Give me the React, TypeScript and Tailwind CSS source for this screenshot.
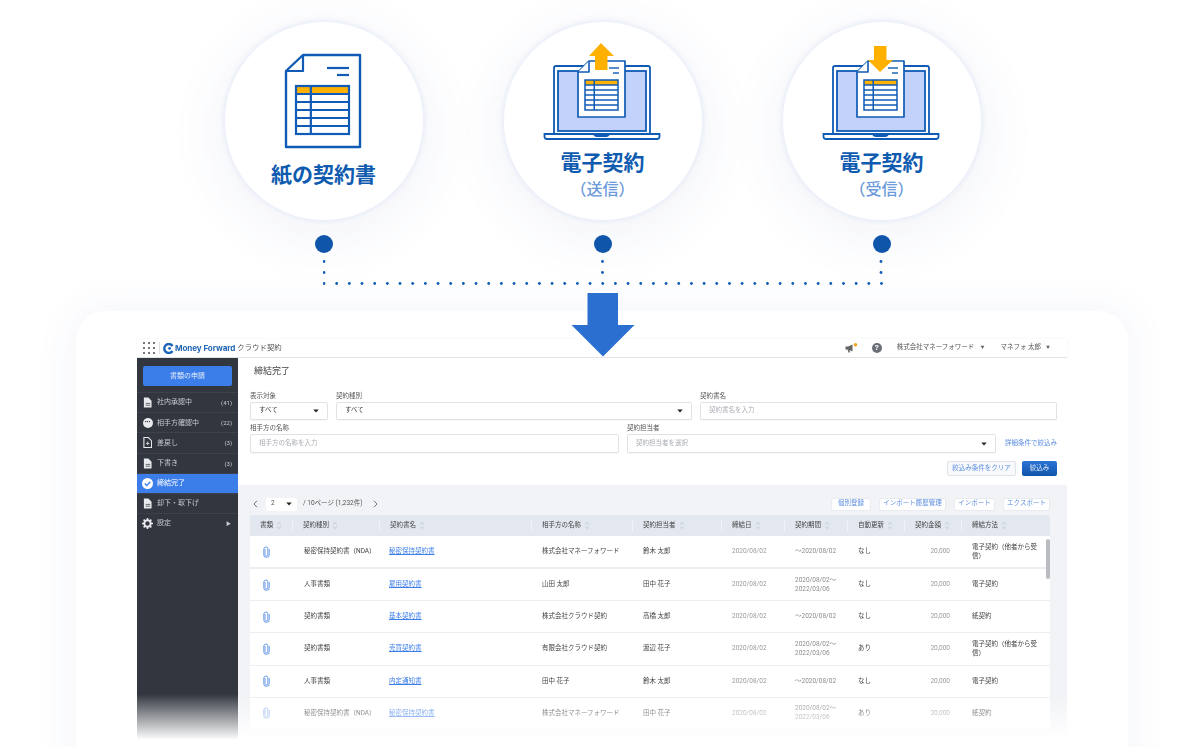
import React from "react";

const BLUE = "#0f5bb5";
const ORANGE = "#ffb000";

function MiniTable({ x, y, w, h, sw }: { x: number; y: number; w: number; h: number; sw: number }) {
  const rows = 6;
  const rh = h / rows;
  const split = x + w * 0.28;
  return (
    <g>
      <rect x={x} y={y} width={w} height={rh} fill={ORANGE} />
      <rect x={x} y={y} width={w} height={h} fill="none" stroke={BLUE} strokeWidth={sw} />
      {[1, 2, 3, 4, 5].map((i) => (
        <line key={i} x1={x} x2={x + w} y1={y + rh * i} y2={y + rh * i} stroke={BLUE} strokeWidth={sw} />
      ))}
      <line x1={split} x2={split} y1={y} y2={y + h} stroke={BLUE} strokeWidth={sw} />
    </g>
  );
}

function PaperIcon() {
  return (
    <svg width="80" height="96" viewBox="0 0 80 96" className="ml-[-1px] block">
      <path d="M20 2 H77 V94 H3 V18 Z" fill="#fff" stroke={BLUE} strokeWidth="2.4" strokeLinejoin="round" />
      <path d="M20 2 V18 H3" fill="none" stroke={BLUE} strokeWidth="2.2" strokeLinejoin="round" />
      <line x1="44" x2="66" y1="15" y2="15" stroke={BLUE} strokeWidth="2.2" />
      <line x1="54" x2="66" y1="22" y2="22" stroke={BLUE} strokeWidth="2.2" />
      <MiniTable x={13} y={33} w={53} h={48} sw={2.2} />
    </svg>
  );
}

function LaptopIcon({ dir }: { dir: "up" | "down" }) {
  return (
    <svg width="118" height="98" viewBox="0 0 118 98" className="ml-[-2px] block">
      <path d="M11 26 Q11 24 13 24 H105 Q107 24 107 26 V92 H11 Z" fill="#fff" stroke={BLUE} strokeWidth="1.8" />
      <rect x="15" y="29" width="88" height="60" fill="#c2d2fa" stroke={BLUE} strokeWidth="1.8" />
      <path d="M1.5 92 H116.5 V94.5 Q116.5 97 114 97 H4 Q1.5 97 1.5 94.5 Z" fill="#fff" stroke={BLUE} strokeWidth="1.8" />
      <path d="M50 92 H67 Q66 95 63 95 H54 Q51 95 50 92 Z" fill={BLUE} />
      <path d="M46 19 H82 V75 H35 V30 Z" fill="#fff" stroke={BLUE} strokeWidth="1.7" strokeLinejoin="round" />
      <path d="M46 19 V30 H35" fill="#fff" stroke={BLUE} strokeWidth="1.6" strokeLinejoin="round" />
      <line x1="66" x2="76" y1="26" y2="26" stroke={BLUE} strokeWidth="1.4" />
      <line x1="70" x2="76" y1="31" y2="31" stroke={BLUE} strokeWidth="1.4" />
      <MiniTable x={42} y={38} w={33} h={30} sw={1.5} />
      {dir === "down" ? (
        <path d="M52 4 H64.5 V18 H71 L58 30 L46 18 H52 Z" fill={ORANGE} />
      ) : (
        <path d="M58 1 L71 14 H64.5 V28 H52 V14 H46 Z" fill={ORANGE} />
      )}
    </svg>
  );
}

function Bubble({ title, sub, children }: { title: string; sub?: string; children: React.ReactNode }) {
  return (
    <div className="flex w-[279px] flex-col items-center">
      <div className="flex h-[198px] w-[198px] flex-col items-center rounded-full bg-white shadow-[0_0_3px_3px_rgba(228,233,248,0.5),0_12px_50px_14px_rgba(60,80,150,0.05)]">
        {sub ? (
          <>
            <div className="mt-[20px] h-[98px]">{children}</div>
            <div className="mt-[9px] text-[21px] leading-[28px] font-bold text-[#0f5bb0]">{title}</div>
            <div className="mt-0 text-[16px] leading-[26px] font-medium text-[#6d9adb]">{sub}</div>
          </>
        ) : (
          <>
            <div className="mt-[31px] h-[96px]">{children}</div>
            <div className="mt-[11px] text-[21px] leading-[30px] font-bold text-[#0f5bb0]">{title}</div>
          </>
        )}
      </div>
      <div className="mt-[15px] h-[18px] w-[18px] rounded-full bg-[#0f55aa]" />
    </div>
  );
}

function Connector() {
  const xs = Array.from({ length: 45 }, (_, i) => i * 12.67);
  return (
    <svg width="560" height="26" viewBox="0 0 560 26" className="mt-[7px] ml-[139px] block">
      {xs.map((x) => (
        <circle key={x} cx={x + 1} cy="23.5" r="1.4" fill={BLUE} />
      ))}
      {[1, 279.5, 558].flatMap((x) =>
        [1.5, 12.5].map((y) => <circle key={`${x}-${y}`} cx={x} cy={y} r="1.4" fill={BLUE} />)
      )}
    </svg>
  );
}

function DocGlyph({ plus }: { plus?: boolean }) {
  return (
    <svg width="9" height="11" viewBox="0 0 10 12" className="block">
      <path d="M1 0.5 H6 L9.5 4 V11.5 H1 Z" fill={plus ? "none" : "#e8eaee"} stroke="#e8eaee" strokeWidth={plus ? 1.2 : 0} />
      {plus ? (
        <path d="M3.5 7 H7 M5.2 5.2 V8.8" stroke="#e8eaee" strokeWidth="1" />
      ) : (
        <path d="M3 7 H8 M3 9 H8" stroke="#31363f" strokeWidth="0.8" />
      )}
    </svg>
  );
}

function SideItem({ icon, label, count, active, arrow }: { icon: React.ReactNode; label: string; count?: string; active?: boolean; arrow?: boolean }) {
  return (
    <div className={`flex h-[20.2px] items-center border-t border-[#3c414b] pr-[6px] pl-[5px] text-[7px] ${active ? "bg-[#3b7de9] text-white" : "text-[#c9ccd3]"}`}>
      <div className="flex w-[11px] shrink-0 justify-center">{icon}</div>
      <span className="ml-[4px]">{label}</span>
      {count && <span className="ml-auto text-[6px]">{count}</span>}
      {arrow && <span className="mr-[1px] ml-auto text-[5px]">▶</span>}
    </div>
  );
}

function Sort() {
  return (
    <svg width="4" height="7" viewBox="0 0 4 7" className="ml-[4px] block shrink-0">
      <path d="M0 2.6 L2 0.4 L4 2.6 M0 4.4 L2 6.6 L4 4.4" fill="none" stroke="#b4bcc9" strokeWidth="0.7" />
    </svg>
  );
}

function Clip({ faded }: { faded?: boolean }) {
  return (
    <svg width="7" height="12" viewBox="0 0 7 12" className="block" opacity={faded ? 0.8 : 1}>
      <path d="M2 3 V8.8 Q2 10 3.4 10 Q4.8 10 4.8 8.8 V2.6 Q4.8 1 3.3 1 Q1 1 0.8 3 V9 Q0.8 11.4 3.4 11.4 Q6.2 11.4 6.2 9 V3" fill="none" stroke="#5d92e6" strokeWidth="0.9" />
    </svg>
  );
}

function Caret() {
  return (
    <svg width="6" height="4" viewBox="0 0 6 4" className="block shrink-0">
      <path d="M0.3 0.5 H5.7 L3 3.6 Z" fill="#222" />
    </svg>
  );
}

function Chevron({ right }: { right?: boolean }) {
  return (
    <svg width="5" height="8" viewBox="0 0 5 8" className="block shrink-0">
      <path d={right ? "M1 0.8 L4 4 L1 7.2" : "M4 0.8 L1 4 L4 7.2"} fill="none" stroke="#666" strokeWidth="0.9" />
    </svg>
  );
}

const COLS = "grid grid-cols-[42px_87px_152px_101px_89px_63px_63px_57px_57px_89px]";

const HEAD = ["書類", "契約種別", "契約書名", "相手方の名称", "契約担当者", "締結日", "契約期間", "自動更新", "契約金額", "締結方法"];

const ROWS = [
  ["秘密保持契約書（NDA）", "秘密保持契約書", "株式会社マネーフォワード", "鈴木 太郎", "〜2020/08/02", "なし", "電子契約（他者から受信）"],
  ["人事書類", "雇用契約書", "山田 太郎", "田中 花子", "2020/08/02〜 2022/03/06", "なし", "電子契約"],
  ["契約書類", "基本契約書", "株式会社クラウド契約", "高橋 太郎", "〜2020/08/02", "なし", "紙契約"],
  ["契約書類", "売買契約書", "有限会社クラウド契約", "渡辺 花子", "2020/08/02〜 2022/03/06", "あり", "電子契約（他者から受信）"],
  ["人事書類", "内定通知書", "田中 花子", "鈴木 太郎", "〜2020/08/02", "なし", "電子契約"],
  ["秘密保持契約書（NDA）", "秘密保持契約書", "株式会社マネーフォワード", "田中 花子", "2020/08/02〜 2022/03/06", "あり", "紙契約"],
];

function Field({ label, w, text, placeholder, caret }: { label: string; w: string; text?: string; placeholder?: string; caret?: boolean }) {
  return (
    <div className={w}>
      <div className="h-[11px] text-[6.5px] leading-[11px] text-[#555]">{label}</div>
      <div className="flex h-full items-center rounded-[2px] border border-[#dfe2e7] bg-white px-[8px] text-[6.5px] shadow-[0_1px_1px_rgba(0,0,0,0.04)]">
        <span className={text ? "text-[#444]" : "text-[#a9adb4]"}>{text ?? placeholder}</span>
        {caret && <span className="ml-auto"><Caret /></span>}
      </div>
    </div>
  );
}

function GhostBtn({ label, w }: { label: string; w: string }) {
  return (
    <div className={`flex h-[13px] items-center justify-center rounded-[2px] border border-[#e9ebef] bg-white text-[6.5px] text-[#5c8ee0] ${w}`}>{label}</div>
  );
}

function AppShot() {
  return (
    <div className="relative h-[400px] w-[930px] bg-white blur-[0.5px]">
      <header className="flex h-[19px] items-center border-b border-[#e3e5e9] shadow-[0_0_3px_rgba(0,0,0,0.05)]">
        <svg width="12" height="12" viewBox="0 0 12 12" className="ml-[6px] block">
          {[1, 6, 11].flatMap((x) => [1, 6, 11].map((y) => <rect key={`${x}${y}`} x={x - 1} y={y - 1} width="2" height="2" fill="#777" />))}
        </svg>
        <div className="ml-[4px] h-[12px] w-px bg-[#e0e0e0]" />
        <svg width="11" height="11" viewBox="0 0 11 11" className="ml-[3px] block">
          <path d="M9.5 3 A4.5 4.5 0 1 0 9.5 8" fill="none" stroke="#1c64b8" strokeWidth="2.4" />
          <circle cx="6.6" cy="5.4" r="1.4" fill="#1c64b8" />
        </svg>
        <span className="ml-[1px] text-[8.1px] font-bold tracking-[-0.1px] text-[#2268b4] [font-family:Inter,sans-serif]">Money Forward</span>
        <span className="ml-[2px] text-[7.4px] text-[#555]">クラウド契約</span>
        <svg width="13" height="11" viewBox="0 0 13 11" className="ml-auto block">
          <path d="M0.5 3.5 H3 L7.5 1.5 V8.5 L3 6.5 H0.5 Z M2.5 6.5 L3.5 9.5 H5 L4.5 7" fill="#666" />
          <circle cx="10.5" cy="1.8" r="1.8" fill="#f5a623" />
        </svg>
        <div className="ml-[14px] flex h-[10px] w-[10px] items-center justify-center rounded-full bg-[#6b7077] text-[8px] font-bold text-white">?</div>
        <span className="ml-[15px] text-[6.5px] text-[#555]">株式会社マネーフォワード</span>
        <span className="ml-[6px] text-[4px] text-[#666]">▼</span>
        <span className="ml-[16px] text-[6.5px] text-[#555]">マネフォ 太郎</span>
        <span className="mr-[17px] ml-[5px] text-[4px] text-[#666]">▼</span>
      </header>

      <div className="flex h-[381px]">
        <aside className="w-[101px] shrink-0 bg-[#31363f]">
          <div className="mx-[6px] mt-[8px] flex h-[20px] items-center justify-center rounded-[2px] bg-[#3b7de9] text-[7px] text-[#e6eefc]">書類の申請</div>
          <div className="mt-[6px]">
            <SideItem icon={<DocGlyph />} label="社内承認中" count="(41)" />
            <SideItem
              icon={<div className="flex h-[10px] w-[10px] items-center justify-center rounded-full bg-[#e8eaee] text-[5px] leading-none font-bold text-[#31363f]">•••</div>}
              label="相手方確認中"
              count="(22)"
            />
            <SideItem icon={<DocGlyph plus />} label="差戻し" count="(3)" />
            <SideItem icon={<DocGlyph />} label="下書き" count="(3)" />
            <SideItem
              active
              icon={
                <svg width="11" height="11" viewBox="0 0 11 11" className="block">
                  <circle cx="5.5" cy="5.5" r="5.5" fill="#fff" />
                  <path d="M2.8 5.6 L4.8 7.6 L8.3 3.8" fill="none" stroke="#3b7de9" strokeWidth="1.4" />
                </svg>
              }
              label="締結完了"
            />
            <SideItem icon={<DocGlyph />} label="却下・取下げ" />
            <SideItem
              icon={
                <svg width="11" height="11" viewBox="0 0 11 11" className="block">
                  <circle cx="5.5" cy="5.5" r="3.2" fill="none" stroke="#e8eaee" strokeWidth="2" />
                  <path d="M5.5 0 V2 M5.5 9 V11 M0 5.5 H2 M9 5.5 H11 M1.6 1.6 L3 3 M8 8 L9.4 9.4 M9.4 1.6 L8 3 M3 8 L1.6 9.4" stroke="#e8eaee" strokeWidth="1.6" />
                </svg>
              }
              label="設定"
              arrow
            />
          </div>
        </aside>

        <main className="flex min-w-0 flex-1 flex-col bg-[#f1f3f6]">
          <section className="h-[127px] bg-white pt-[7px] pr-[10px] pl-[12px]">
            <div className="pl-[4px] text-[9px] leading-[12px] text-[#444]">締結完了</div>
            <div className="mt-[14px] flex h-[18px] gap-[8px]">
              <Field label="表示対象" w="w-[78px]" text="すべて" caret />
              <Field label="契約種別" w="w-[356px]" text="すべて" caret />
              <Field label="契約書名" w="w-[357px]" placeholder="契約書名を入力" />
            </div>
            <div className="mt-[14px] flex h-[19px] items-start gap-[8px]">
              <Field label="相手方の名称" w="h-[19px] w-[369px]" placeholder="相手方の名称を入力" />
              <Field label="契約担当者" w="h-[19px] w-[369px]" placeholder="契約担当者を選択" caret />
              <div className="mt-[11px] ml-[1px] flex h-[19px] items-center text-[6.5px] whitespace-nowrap text-[#5c8ee0]">詳細条件で絞込み</div>
            </div>
            <div className="mt-[19px] flex h-[15px] justify-end gap-[6px]">
              <div className="flex w-[69px] items-center justify-center rounded-[2px] border border-[#e0e3e8] bg-[#f8f9fa] text-[6.5px] text-[#5c8ee0]">絞込み条件をクリア</div>
              <div className="flex w-[35px] items-center justify-center rounded-[2px] bg-gradient-to-b from-[#2a74d6] to-[#0f55aa] text-[6.5px] text-[#dfe9f8]">絞込み</div>
            </div>
          </section>

          <div className="flex h-[30px] items-center pt-[8px] pr-[17px] pl-[12px] text-[6.5px] text-[#555]">
            <span className="ml-[3px]"><Chevron /></span>
            <div className="ml-[8px] flex h-[13px] w-[31px] items-center rounded-[2px] bg-white pr-[5px] pl-[5px]">
              2<span className="ml-auto"><Caret /></span>
            </div>
            <span className="ml-[6px]">/ 10ページ (1,232件)</span>
            <span className="ml-[11px]"><Chevron right /></span>
            <div className="ml-auto flex gap-[8px]">
              <GhostBtn label="個別登録" w="w-[40px]" />
              <GhostBtn label="インポート履歴管理" w="w-[67px]" />
              <GhostBtn label="インポート" w="w-[41px]" />
              <GhostBtn label="エクスポート" w="w-[47px]" />
            </div>
          </div>

          <div className="relative ml-[12px] w-[800px]">
            <div className={`${COLS} h-[21px] items-center rounded-t-[2px] bg-[#e2e7f0] text-[6.5px] text-[#444]`}>
              {HEAD.map((h, i) => (
                <div key={h} className={`flex h-[10px] items-center pl-[10px] ${i > 0 ? "border-l border-[#f2f4f8]" : ""}`}>
                  {h}
                  <Sort />
                </div>
              ))}
            </div>
            {ROWS.map((r, i) => (
              <div key={i} className={`${COLS} ${i === 0 ? "h-[33px] border-b-2" : "h-[32.2px] border-b"} items-center border-[#eceef1] bg-white text-[6.5px] leading-[9px] text-[#444]`}>
                <div className="flex justify-center pr-[10px]"><Clip faded={i === 5} /></div>
                <div className="pl-[12px] whitespace-nowrap">{r[0]}</div>
                <div className="pl-[10px] text-[#3b7de9] underline">{r[1]}</div>
                <div className="pl-[11px]">{r[2]}</div>
                <div className="pl-[11px]">{r[3]}</div>
                <div className="pl-[11px] text-[#9a9a9a]">2020/08/02</div>
                <div className="pr-[8px] pl-[11px] text-[#8c8c8c]">{r[4]}</div>
                <div className="pl-[11px]">{r[5]}</div>
                <div className="pr-[11px] text-right text-[#9a9a9a]">20,000</div>
                <div className="pr-[12px] pl-[11px]">{r[6]}</div>
              </div>
            ))}
            <div className="absolute top-[24px] right-0 h-[40px] w-[4px] rounded-full bg-[#b9bcc1]" />
          </div>
        </main>
      </div>
      <div className="absolute inset-x-[-2px] bottom-[-1px] h-[46px] bg-gradient-to-b from-white/0 to-white" />
    </div>
  );
}

export default function App() {
  return (
    <div className="relative h-[747px] w-[1203px] overflow-hidden bg-white [font-family:Roboto,'Noto_Sans_CJK_JP',sans-serif]">
      <div className="ml-[184px] flex w-[837px] pt-[22px]">
        <Bubble title="紙の契約書"><PaperIcon /></Bubble>
        <Bubble title="電子契約" sub="（送信）"><LaptopIcon dir="up" /></Bubble>
        <Bubble title="電子契約" sub="（受信）"><LaptopIcon dir="down" /></Bubble>
      </div>
      <div className="ml-[184px]"><Connector /></div>
      <div className="mt-[25px] ml-[76px] h-[480px] w-[1052px] rounded-[30px] bg-white pt-[28px] pl-[61px] shadow-[0_0_40px_6px_rgba(60,80,150,0.05)]">
        <AppShot />
      </div>
      <svg width="64" height="64" viewBox="0 0 64 64" className="absolute top-[293px] left-[571px] block">
        <path d="M16.5 0 H47 V32 H63.5 L32 63.5 L0.5 32 H16.5 Z" fill="#2b6fd0" />
      </svg>
    </div>
  );
}
